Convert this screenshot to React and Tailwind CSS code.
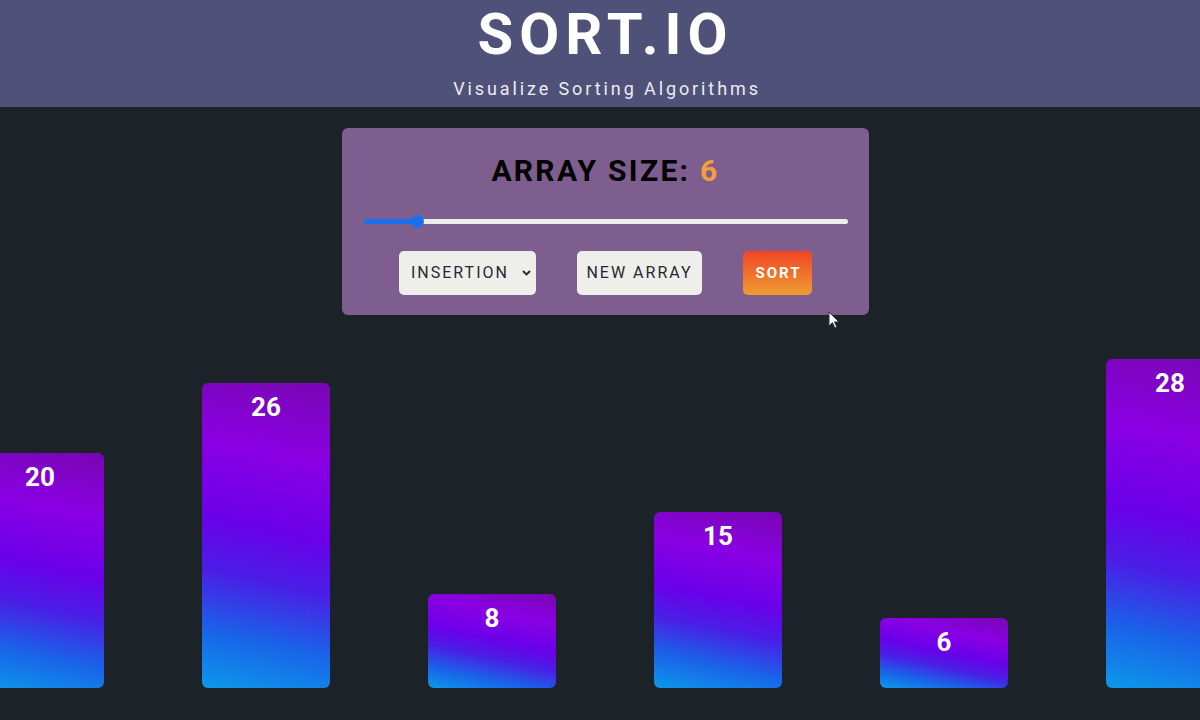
import { useState } from "react";

const bars = [20, 26, 8, 15, 6, 28];

const Bar = ({ value }) => (
  <div
    className="shrink-0 w-[128px] rounded-[6px] flex justify-center pt-[9px] text-white font-bold text-[26px] leading-[30px] bg-[linear-gradient(192deg,#7806b2_0%,#8a00e4_25%,#6a00e8_48%,#4a1ee6_64%,#1a62e8_82%,#0c98ea_100%)]"
    style={{ height: `${value * 11.75}px` }}
  >
    {value}
  </div>
);

const App = () => {
  const [size, setSize] = useState(6);
  const [algo, setAlgo] = useState("insertion");

  const min = 2;
  const max = 42;
  // fill up to the thumb centre (thumb is 13px wide, track 484px)
  const fill = 6.5 + ((size - min) / (max - min)) * (484 - 13);

  return (
    <div className="relative h-[720px] w-full overflow-hidden bg-[#1b2329] flex flex-col font-['Roboto',sans-serif]">
      {/* Header */}
      <header className="h-[107px] bg-[#4f5178] flex flex-col items-center shrink-0 pl-[11px]">
        <h1 className="text-white font-bold text-[58px] leading-[68px] tracking-[6px]">
          SORT.IO
        </h1>
        <p className="mt-[9px] text-[#ecebf3] text-[18px] leading-[24px] tracking-[2.9px] pl-[3px]">
          Visualize Sorting Algorithms
        </p>
      </header>

      {/* Controls */}
      <div className="flex justify-center mt-[21px] shrink-0 pl-[11px]">
        <div className="w-[527px] h-[187px] rounded-[6px] bg-[#7e5e8e] px-[22px] pt-[25px] flex flex-col items-center">
          <h2 className="text-[30px] leading-[36px] font-bold tracking-[2.3px] text-black">
            ARRAY SIZE: <span className="text-[#f2a03a]">{size}</span>
          </h2>
          <input
            type="range"
            min={min}
            max={max}
            value={size}
            onChange={(e) => setSize(Number(e.target.value))}
            className="mt-[30px] w-[484px] h-[5px] rounded-full appearance-none outline-none cursor-pointer [&::-webkit-slider-thumb]:appearance-none [&::-webkit-slider-thumb]:w-[13px] [&::-webkit-slider-thumb]:h-[13px] [&::-webkit-slider-thumb]:rounded-full [&::-webkit-slider-thumb]:bg-[#1a6ff0]"
            style={{
              background: `linear-gradient(to right, #1a6ff0 ${fill}px, #ececea ${fill}px)`,
            }}
          />
          <div className="mt-[27px] flex justify-center gap-[41px]">
            <div className="relative">
              <select
                value={algo}
                onChange={(e) => setAlgo(e.target.value)}
                className="appearance-none h-[44px] w-[137px] rounded-[5px] bg-[#eeeeea] pl-[12px] text-[16px] tracking-[2px] text-[#2b2633] outline-none"
              >
                <option value="bubble">BUBBLE</option>
                <option value="insertion">INSERTION</option>
                <option value="selection">SELECTION</option>
                <option value="merge">MERGE</option>
              </select>
              <svg
                className="pointer-events-none absolute right-[5px] top-[19px]"
                width="9"
                height="6"
                viewBox="0 0 9 6"
              >
                <path d="M1 1l3.5 3.5L8 1" fill="none" stroke="#2b2633" strokeWidth="1.8" />
              </svg>
            </div>
            <button className="h-[44px] w-[125px] rounded-[5px] bg-[#eeeeea] text-[16px] tracking-[2px] text-[#2b2633]">
              NEW ARRAY
            </button>
            <button className="h-[44px] w-[69px] rounded-[5px] bg-[linear-gradient(180deg,#ef4524,#ef9c32)] text-white font-bold text-[15px] tracking-[2px] pl-[2px]">
              SORT
            </button>
          </div>
        </div>
      </div>

      {/* Bars */}
      <div className="flex-1 flex items-end gap-[98px] pb-[32px] ml-[-24px]">
        {bars.map((v, i) => (
          <Bar key={i} value={v} />
        ))}
      </div>

      {/* mouse cursor */}
      <svg
        className="absolute left-[828px] top-[311px]"
        width="12"
        height="18"
        viewBox="0 0 12 18"
      >
        <path
          d="M1 1v14l3.5-3.3 2.4 5.3 2-.9-2.4-5.2H11z"
          fill="#ffffff"
          stroke="#333"
          strokeWidth="1"
          strokeLinejoin="round"
        />
      </svg>
    </div>
  );
};

export default App;
